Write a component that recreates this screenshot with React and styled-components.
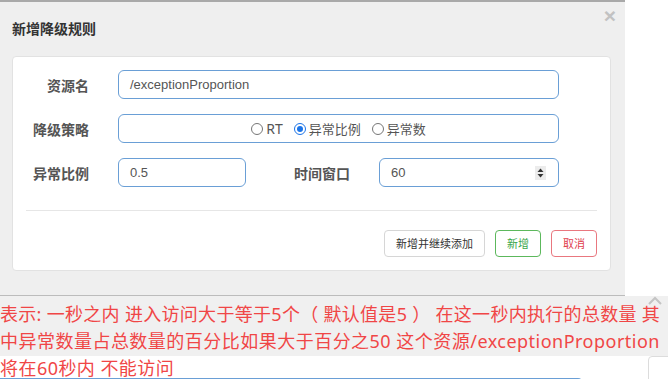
import React from "react";
import styled, { createGlobalStyle } from "styled-components";

const Global = createGlobalStyle`
  html, body { margin: 0; padding: 0; background: #fff; }
  body { width: 668px; height: 379px; overflow: hidden; font-family: "Liberation Sans", "Noto Sans CJK SC", sans-serif; }
  * { box-sizing: border-box; }
`;

const Page = styled.div`
  display: flex;
  flex-direction: column;
  width: 668px;
  height: 379px;
`;

const Modal = styled.div`
  width: 625px;
  background: #efefef;
  border-top: 2px solid #a9a9a9;
  border-bottom: 1px solid #bcbcbc;
  padding: 0 0 24px 12px;
  display: flex;
  flex-direction: column;
`;

const Header = styled.div`
  height: 54px;
  display: flex;
  align-items: center;
  justify-content: space-between;
  padding-right: 9px;
`;

const Title = styled.h4`
  margin: 0 0 3px;
  font-family: "Noto Sans CJK SC", sans-serif;
  font-size: 14px;
  font-weight: 700;
  color: #333;
`;

const Close = styled.span`
  align-self: flex-start;
  margin-top: 4px;
  font-family: "Liberation Sans", sans-serif;
  font-size: 21px;
  font-weight: 700;
  line-height: 20px;
  color: #c2c2c2;
`;

const Panel = styled.div`
  width: 599px;
  height: 215px;
  background: #fff;
  border: 1px solid #e2e2e2;
  border-radius: 4px;
  padding: 13px 0 0 0;
  display: flex;
  flex-direction: column;
`;

const Row = styled.div`
  display: flex;
  align-items: center;
  height: 29px;
  margin-bottom: 15px;
`;

const Label = styled.label`
  flex: none;
  width: ${(p) => p.$w}px;
  margin-right: 29px;
  text-align: right;
  font-family: "Noto Sans CJK SC", sans-serif;
  font-size: 14px;
  font-weight: 700;
  color: #555;
`;

const Field = styled.div`
  flex: none;
  width: ${(p) => p.$w}px;
  height: 29px;
  border: 1px solid #6a9fd6;
  border-radius: 6px;
  display: flex;
  align-items: center;
  justify-content: ${(p) => (p.$center ? "center" : "space-between")};
  padding: 0 11px 0 11px;
  font-family: "Liberation Sans", "Noto Sans CJK SC", sans-serif;
  font-size: 13px;
  color: #555;
`;

const Radios = styled.div`
  display: flex;
  align-items: center;
  font-family: "Noto Sans CJK SC", sans-serif;
  font-size: 13px;
  color: #555;
`;

const RadioItem = styled.span`
  display: inline-flex;
  align-items: center;
  margin-left: ${(p) => (p.$first ? 0 : 11)}px;
`;

const Dot = styled.span`
  width: 12px;
  height: 12px;
  border-radius: 50%;
  border: 1px solid ${(p) => (p.$on ? "#1b74e8" : "#767676")};
  margin-right: 3px;
  position: relative;
  background: #fff;
  &::after {
    content: "";
    display: ${(p) => (p.$on ? "block" : "none")};
    position: absolute;
    inset: 2px;
    border-radius: 50%;
    background: #1b74e8;
  }
`;

const RtText = styled.span`
  font-family: "Noto Sans", sans-serif;
  font-size: 14px;
`;

const Spinner = styled.span`
  width: 11px;
  height: 14px;
  background: #ececec;
  display: flex;
  align-items: center;
  justify-content: center;
  margin-right: 1px;
`;

const Divider = styled.div`
  margin: 8px 13px 0;
  border-top: 1px solid #e6e6e6;
`;

const Actions = styled.div`
  display: flex;
  justify-content: flex-end;
  gap: 10px;
  margin: 19px 13px 0;
`;

const Btn = styled.button`
  height: 27px;
  padding: 0 ${(p) => p.$px}px;
  background: #fff;
  border: 1px solid ${(p) => p.$border};
  border-radius: 4px;
  color: ${(p) => p.$color};
  font-family: "Noto Sans CJK SC", sans-serif;
  font-size: 11px;
  line-height: 1;
`;

const Note = styled.div`
  position: relative;
  flex: 1;
  background: linear-gradient(#f0f0f0 0 60px, #fff 60px);
  padding: 5px 0 0 0;
`;

const NoteLine = styled.div`
  position: relative;
  z-index: 1;
  white-space: nowrap;
  height: 27px;
  line-height: 27px;
  font-family: "Noto Sans", "Noto Sans CJK SC", sans-serif;
  font-size: 18px;
  letter-spacing: ${(p) => p.$ls || 0}px;
  color: #f04646;
`;

const Chevron = styled.svg`
  position: absolute;
  right: 5px;
  top: 0px;
`;

const SideBox = styled.div`
  position: absolute;
  left: 648px;
  top: 60px;
  right: -6px;
  bottom: -4px;
  border: 1px solid #dcdcdc;
  border-radius: 4px;
  background: #fff;
`;

const BlueEdge = styled.div`
  position: absolute;
  left: -4px;
  width: 586px;
  bottom: 0;
  height: 4px;
  border: 2px solid #6a9fd6;
  border-bottom: none;
  border-radius: 4px 4px 0 0;
`;

export default function App() {
  return (
    <Page>
      <Global />
      <Modal>
        <Header>
          <Title>新增降级规则</Title>
          <Close>×</Close>
        </Header>
        <Panel>
          <Row>
            <Label $w={76}>资源名</Label>
            <Field $w={441}>/exceptionProportion</Field>
          </Row>
          <Row>
            <Label $w={76}>降级策略</Label>
            <Field $w={441} $center>
              <Radios>
                <RadioItem $first>
                  <Dot />
                  <RtText>RT</RtText>
                </RadioItem>
                <RadioItem>
                  <Dot $on />
                  异常比例
                </RadioItem>
                <RadioItem>
                  <Dot />
                  异常数
                </RadioItem>
              </Radios>
            </Field>
          </Row>
          <Row>
            <Label $w={76}>异常比例</Label>
            <Field $w={128}>0.5</Field>
            <Label $w={104}>时间窗口</Label>
            <Field $w={180}>
              60
              <Spinner>
                <svg width="7" height="10" viewBox="0 0 7 10">
                  <path d="M3.5 0.5 L6.5 4 L0.5 4 Z" fill="#333" />
                  <path d="M3.5 9.5 L6.5 6 L0.5 6 Z" fill="#333" />
                </svg>
              </Spinner>
            </Field>
          </Row>
          <Divider />
          <Actions>
            <Btn $px={11} $border="#d6d6d6" $color="#333">新增并继续添加</Btn>
            <Btn $px={11} $border="#5cb85c" $color="#3aa64a">新增</Btn>
            <Btn $px={11} $border="#e9777f" $color="#e0404e">取消</Btn>
          </Actions>
        </Panel>
      </Modal>
      <Note>
        <Chevron width="16" height="10" viewBox="0 0 16 10">
          <path d="M2 8 L8 2 L14 8" stroke="#c4c4c4" strokeWidth="2" fill="none" />
        </Chevron>
        <SideBox />
        <NoteLine $ls={0.3}>表示: 一秒之内 进入访问大于等于5个（ 默认值是5 ） 在这一秒内执行的总数量 其</NoteLine>
        <NoteLine $ls={0.48}>中异常数量占总数量的百分比如果大于百分之50 这个资源/exceptionProportion</NoteLine>
        <NoteLine $ls={0.45}>将在60秒内 不能访问</NoteLine>
        <BlueEdge />
      </Note>
    </Page>
  );
}
